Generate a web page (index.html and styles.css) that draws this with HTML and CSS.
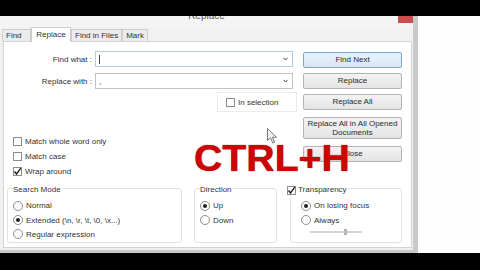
FILE: index.html
```html
<!DOCTYPE html>
<html>
<head>
<meta charset="utf-8">
<link rel="stylesheet" href="styles.css">
</head>
<body>
<div class="band-top"></div>
<div class="mid">
  <div class="window">
    <div class="titlebar">
      <span></span>
      <span class="title">Replace</span>
      <span class="close"></span>
    </div>
    <div class="tabs">
      <div class="tab tab-find">Find</div>
      <div class="tab tab-sel">Replace</div>
      <div class="tab">Find in Files</div>
      <div class="tab">Mark</div>
    </div>
    <div class="panel">
      <div class="top">
        <div class="left">
          <div class="row row1">
            <span class="lbl">Find what :</span>
            <div class="combo combo-focus"><span class="caret"></span><svg class="chev" width="5" height="4" viewBox="0 0 5 4"><polyline points="0.5,0.8 2.5,3 4.5,0.8" fill="none" stroke="#444" stroke-width="1"/></svg></div>
          </div>
          <div class="row row2">
            <span class="lbl">Replace with :</span>
            <div class="combo"><span class="val">,</span><svg class="chev" width="5" height="4" viewBox="0 0 5 4"><polyline points="0.5,0.8 2.5,3 4.5,0.8" fill="none" stroke="#444" stroke-width="1"/></svg></div>
          </div>
          <div class="insel">
            <span class="cb"></span><span class="txt">In selection</span>
          </div>
          <div class="checks">
            <div class="chk"><span class="cb"></span><span class="txt">Match whole word only</span></div>
            <div class="chk"><span class="cb"></span><span class="txt">Match case</span></div>
            <div class="chk"><span class="cb cb-on"><svg width="9" height="9" viewBox="0 0 9 9"><polyline points="1.5,4.5 3.5,7 7.8,1.2" fill="none" stroke="#222" stroke-width="1.4"/></svg></span><span class="txt">Wrap around</span></div>
          </div>
        </div>
        <div class="right">
          <div class="btn btn-def">Find Next</div>
          <div class="btn">Replace</div>
          <div class="btn">Replace All</div>
          <div class="btn btn-tall">Replace All in All Opened<br>Documents</div>
          <div class="btn btn-close">Close</div>
        </div>
      </div>
      <div class="groups">
        <div class="grp grp-search">
          <span class="cap">Search Mode</span>
          <div class="opt opt-first"><span class="rb"></span><span class="txt">Normal</span></div>
          <div class="opt"><span class="rb rb-on"></span><span class="txt">Extended (\n, \r, \t, \0, \x...)</span></div>
          <div class="opt"><span class="rb"></span><span class="txt">Regular expression</span></div>
        </div>
        <div class="grp grp-dir">
          <span class="cap">Direction</span>
          <div class="opt opt-first"><span class="rb rb-on"></span><span class="txt">Up</span></div>
          <div class="opt"><span class="rb"></span><span class="txt">Down</span></div>
        </div>
        <div class="grp grp-trans">
          <span class="cap cap-chk"><span class="cb cb-on"><svg width="9" height="9" viewBox="0 0 9 9"><polyline points="1.5,4.5 3.5,7 7.8,1.2" fill="none" stroke="#222" stroke-width="1.4"/></svg></span><span class="txt">Transparency</span></span>
          <div class="opt opt-first"><span class="rb rb-on"></span><span class="txt">On losing focus</span></div>
          <div class="opt"><span class="rb"></span><span class="txt">Always</span></div>
          <div class="slider"><span class="track"></span><span class="thumb"></span></div>
        </div>
      </div>
    </div>
    <div class="winbottom"></div>
  </div>
  <div class="outside"></div>
</div>
<div class="band-bottom"></div>

<div class="hotkey">CTRL+H</div>
<svg class="cursor" width="11" height="16" viewBox="0 0 11 16">
  <path d="M0.5,0.5 L0.5,12.5 L3.5,9.8 L5.8,15 L7.6,14.2 L5.4,9.2 L9.5,9.2 Z" fill="#f4f4f4" stroke="#777" stroke-width="1"/>
</svg>
</body>
</html>
```

FILE: styles.css
```css
html, body {
  margin: 0;
  padding: 0;
}
body {
  width: 480px;
  height: 270px;
  overflow: hidden;
  position: relative;
  display: flex;
  flex-direction: column;
  background: #000;
  font-family: "Liberation Sans", Arial, sans-serif;
  font-size: 8px;
  color: #2b2b2b;
}
.band-top {
  height: 16px;
  background: #000;
  flex: none;
}
.band-bottom {
  height: 17px;
  background: #000;
  flex: none;
}
.mid {
  height: 237px;
  display: flex;
  background: #fff;
  flex: none;
}
.window {
  width: 413px;
  border-right: 5px solid #c9c9c9;
  background: #f1f1f1;
  display: flex;
  flex-direction: column;
}
.outside {
  flex: 1;
  background: #fdfdfd;
}
.titlebar {
  height: 12px;
  overflow: hidden;
  display: grid;
  grid-template-columns: 1fr auto 1fr;
  background: #f4f4f4;
}
.title {
  font-size: 10px;
  line-height: 10px;
  margin-top: -5px;
  color: #5a5a5a;
}
.close {
  justify-self: end;
  width: 17px;
  height: 7px;
  background: #c9504f;
  margin-right: -2px;
}
.tabs {
  height: 13px;
  display: flex;
  align-items: flex-end;
  padding-left: 2px;
  position: relative;
  z-index: 1;
}
.tab {
  height: 12px;
  box-sizing: border-box;
  border: 1px solid #cdcdcd;
  border-bottom: none;
  background: #ececec;
  padding: 0 3px;
  line-height: 11px;
  color: #333;
  margin-bottom: 0;
}
.tab-find {
  width: 29px;
}
.tab-sel {
  height: 15px;
  margin-bottom: -1px;
  background: #fff;
  width: 40px;
  text-align: center;
  line-height: 13px;
}
.panel {
  margin-left: 3px;
  width: 409px;
  height: 207px;
  box-sizing: border-box;
  border: 1px solid #d3d3d3;
  background: #fff;
  display: flex;
  flex-direction: column;
}
.top {
  height: 146px;
  display: flex;
}
.left {
  width: 299px;
}
.right {
  width: 99px;
  padding-top: 10px;
  display: flex;
  flex-direction: column;
}
.row {
  height: 16px;
  display: flex;
  align-items: center;
}
.row1 {
  margin-top: 9px;
}
.row2 {
  margin-top: 6px;
}
.lbl {
  width: 88px;
  text-align: right;
  margin-right: 3px;
  color: #333;
}
.combo {
  width: 198px;
  height: 16px;
  box-sizing: border-box;
  border: 1px solid #c2c2c2;
  background: #fff;
  display: flex;
  align-items: center;
}
.combo-focus {
  border-color: #b4cbe6;
}
.caret {
  width: 0;
  height: 9px;
  border-left: 1px solid #444;
  margin-left: 3px;
}
.val {
  margin-left: 3px;
  color: #444;
}
.chev {
  margin-left: auto;
  margin-right: 4px;
}
.insel {
  margin-top: 3px;
  margin-left: 213px;
  width: 80px;
  height: 20px;
  box-sizing: border-box;
  border: 1px solid #ececec;
  display: flex;
  align-items: center;
  padding-left: 8px;
}
.checks {
  margin-top: 22px;
  margin-left: 9px;
}
.chk {
  height: 14px;
  margin-bottom: 1px;
  display: flex;
  align-items: center;
}
.cb {
  width: 9px;
  height: 9px;
  box-sizing: border-box;
  border: 1px solid #8c8c8c;
  background: #fff;
  flex: none;
  display: flex;
  align-items: center;
  justify-content: center;
}
.cb svg {
  flex: none;
}
.txt {
  margin-left: 3px;
  white-space: nowrap;
  color: #333;
}
.btn {
  height: 16px;
  box-sizing: border-box;
  border: 1px solid #b3b3b3;
  border-radius: 2px;
  background: linear-gradient(#f3f3f3, #e4e4e4);
  text-align: center;
  line-height: 14px;
  color: #2b2b2b;
  margin-bottom: 5px;
}
.btn-def {
  border-color: #7ea6d6;
  background: linear-gradient(#e9f2fb, #d7e6f5);
}
.btn-tall {
  height: 22px;
  line-height: 9px;
  padding-top: 1px;
  margin-top: 2px;
  margin-bottom: 7px;
}
.groups {
  height: 55px;
  display: flex;
  margin-left: 3px;
}
.grp {
  box-sizing: border-box;
  border: 1px solid #e1e1e1;
  border-radius: 3px;
  display: flex;
  flex-direction: column;
  padding-left: 5px;
}
.grp-search {
  width: 175px;
}
.grp-dir {
  width: 83px;
  margin-left: 12px;
}
.grp-trans {
  width: 112px;
  margin-left: 13px;
  padding-left: 10px;
}
.cap {
  align-self: flex-start;
  height: 10px;
  line-height: 10px;
  margin-top: -4px;
  background: #fff;
  padding-right: 1px;
  color: #333;
}
.cap-chk {
  display: flex;
  align-items: center;
  margin-left: -14px;
}
.cap-chk .txt {
  margin-left: 2px;
}
.opt {
  height: 14px;
  display: flex;
  align-items: center;
}
.opt-first {
  margin-top: 3px;
  height: 15px;
}
.rb {
  width: 10px;
  height: 10px;
  box-sizing: border-box;
  border-radius: 50%;
  border: 1px solid #8c8c8c;
  background: #fff;
  flex: none;
  display: flex;
  align-items: center;
  justify-content: center;
}
.rb-on::after {
  content: "";
  width: 4px;
  height: 4px;
  border-radius: 50%;
  background: #1e1e1e;
}
.slider {
  margin-left: 9px;
  margin-top: 2px;
  width: 52px;
  height: 6px;
  display: flex;
  align-items: center;
}
.track {
  width: 34px;
  height: 2px;
  background: #d6d6d6;
}
.thumb {
  width: 3px;
  height: 6px;
  background: #c4c4c4;
  border: 1px solid #b0b0b0;
  box-sizing: border-box;
}
.slider::after {
  content: "";
  width: 15px;
  height: 2px;
  background: #d6d6d6;
}
.winbottom {
  flex: 1;
  border-bottom: 3px solid #c9c9c9;
  background: #efefef;
}
.hotkey {
  position: absolute;
  left: 194px;
  top: 141px;
  font-family: "Liberation Sans", Arial, sans-serif;
  font-weight: bold;
  font-size: 36px;
  line-height: 36px;
  color: #cc0606;
  text-shadow: 0 0 1px #7a0000;
  transform: scaleX(1.09);
  transform-origin: left top;
  white-space: nowrap;
}
.cursor {
  position: absolute;
  left: 267px;
  top: 128px;
}
```
